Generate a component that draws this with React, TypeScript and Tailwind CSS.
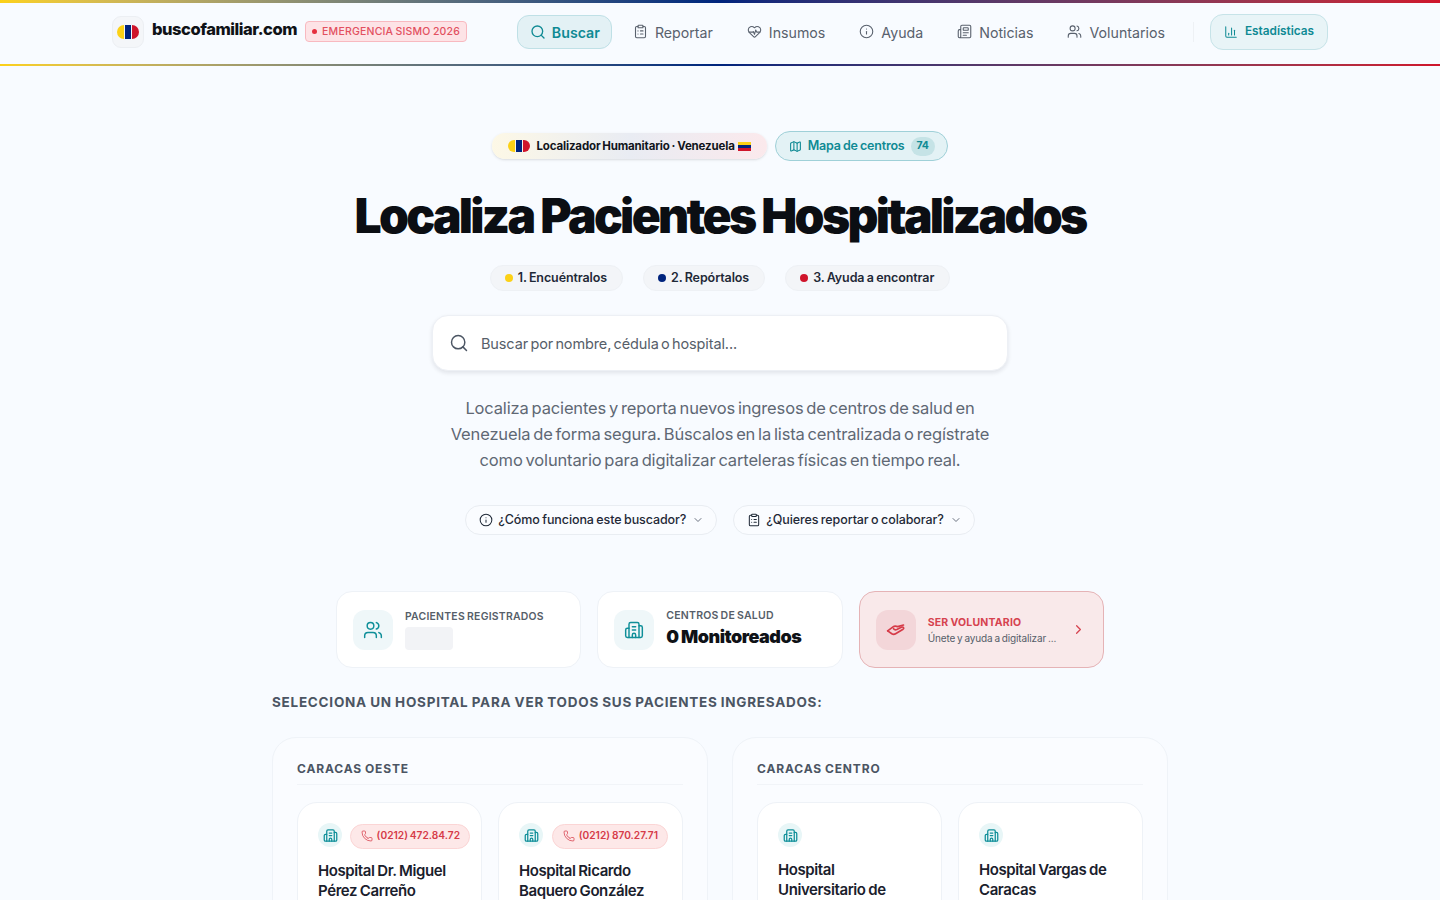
import {
  BarChart3,
  Building2,
  ChevronDown,
  ChevronRight,
  ClipboardList,
  HeartPulse,
  Info,
  Map as MapIcon,
  Newspaper,
  Phone,
  Search,
  Users,
} from 'lucide-react';

const navItems = [
  { label: 'Reportar', icon: ClipboardList },
  { label: 'Insumos', icon: HeartPulse },
  { label: 'Ayuda', icon: Info },
  { label: 'Noticias', icon: Newspaper },
  { label: 'Voluntarios', icon: Users },
];

const zones = [
  {
    name: 'CARACAS OESTE',
    hospitals: [
      { lines: ['Hospital Dr. Miguel', 'Pérez Carreño'], phone: '(0212) 472.84.72', pillMargin: '-mr-[9px]' },
      { lines: ['Hospital Ricardo', 'Baquero González'], phone: '(0212) 870.27.71', pillMargin: '-mr-[6px]' },
    ],
  },
  {
    name: 'CARACAS CENTRO',
    hospitals: [
      { lines: ['Hospital', 'Universitario de'], phone: '', pillMargin: '' },
      { lines: ['Hospital Vargas de', 'Caracas'], phone: '', pillMargin: '' },
    ],
  },
];

function FlagDot({ small }: { small?: boolean }) {
  return (
    <div className={small ? 'flex h-[12px] w-[22px] overflow-hidden' : 'flex h-[14px] w-[22px] overflow-hidden'}>
      <div className="w-[7px] rounded-l-full bg-[#fcd116]" />
      <div className="mx-px w-[7px] flex-1 bg-[#00247d]" />
      <div className="w-[7px] rounded-r-full bg-[#cf142b]" />
    </div>
  );
}

function ClaspIcon() {
  return (
    <svg width="20" height="20" viewBox="0 0 24 24" fill="none" stroke="#d63b48" strokeWidth="2" strokeLinecap="round" strokeLinejoin="round">
      <path d="M2 13l6-4.500c2-1.500 4-1.500 6-.5l7-2" />
      <path d="M2 13l5 3.500c1.500 1 3 1 4.500 0l9-5.500c1.500-1 .5-3-1.500-2.500l-6 3c-1.500 .7-3 .3-4-1" />
    </svg>
  );
}

function StepPill({ color, label }: { color: string; label: string }) {
  return (
    <div className="flex h-[26px] items-center gap-[5px] rounded-full border border-[#eef1f5] bg-[#f3f5f8] pl-[14px] pr-[15px] text-[12.5px] font-semibold tracking-[-0.1px] text-[#1f2937]">
      <span className={`h-2 w-2 rounded-full ${color}`} />
      {label}
    </div>
  );
}

function HospitalCard({ lines, phone, pillMargin }: { lines: string[]; phone: string; pillMargin: string }) {
  return (
    <div className="h-[140px] rounded-[20px] border border-[#eef2f7] bg-white px-5 pt-5">
      <div className="flex h-[24px] items-center justify-between">
        <div className="flex h-6 w-6 items-center justify-center rounded-full bg-[#e8f6f7]">
          <Building2 size={15} className="text-[#0f8f99]" />
        </div>
        {phone && (
          <div className={`${pillMargin} mt-[2px] flex h-[25px] items-center gap-[4px] rounded-full border border-[#fbd5d5] bg-[#fde8e8] pl-[10px] pr-[9px] text-[10.2px] font-semibold text-[#d63b48]`}>
            <Phone size={12} strokeWidth={1.5} />
            {phone}
          </div>
        )}
      </div>
      <div className={`${phone ? 'mt-[14px]' : 'mt-[13px]'} text-[15px] font-semibold leading-[20px] tracking-[-0.4px] text-[#1a202c]`}>
        {lines[0]}
        <br />
        {lines[1]}
      </div>
    </div>
  );
}

export default function App() {
  return (
    <div className="h-[900px] overflow-hidden bg-[#f8fbff] font-['Inter','Liberation_Sans',sans-serif] [word-spacing:-0.7px]">
      <div className="h-[3px] bg-gradient-to-r from-[#fcd116] via-[#00247d] to-[#cf142b]" />
      <header className="flex h-[61px] items-center justify-between px-[112px] pb-[4px]">
        <div className="flex items-center">
          <div className="flex h-8 w-8 items-center justify-center rounded-[9px] border border-[#eceff3] bg-[#f4f6f9]">
            <FlagDot />
          </div>
          <span className="ml-2 -mt-1 text-[16.5px] font-extrabold tracking-[-0.45px] text-[#0f1217]">buscofamiliar.com</span>
          <div className="ml-2 flex h-[21px] items-center gap-[5px] rounded-[4px] border border-[#f8b9c0] bg-[#fde3e6] px-[6px] text-[10.5px] font-medium tracking-[0.2px] text-[#e2505f]">
            <span className="h-[5px] w-[5px] rounded-full bg-[#e5303f]" />
            EMERGENCIA SISMO 2026
          </div>
        </div>
        <nav className="flex items-center">
          <div className="mr-[4px] flex h-[34px] items-center gap-[6px] rounded-[12px] border border-[#bfe0e6] bg-[#e3f1f5] pl-[12px] pr-[11px] text-[14.2px] font-semibold text-[#0f8a94]">
            <Search size={16} />
            <span className="mt-[2px]">Buscar</span>
          </div>
          {navItems.map(({ label, icon: Icon }) => (
            <div key={label} className="flex items-center gap-[7px] px-[17px] text-[14.2px] text-[#59616d]">
              <Icon size={15} strokeWidth={1.75} />
              <span className="mt-[2px]">{label}</span>
            </div>
          ))}
          <div className="ml-[11px] mr-[16px] h-[20px] w-px bg-[#eef1f5]" />
          <div className="flex h-[36px] items-center gap-[7px] rounded-[13px] border border-[#c6e3e8] bg-[#e8f4f7] pl-[13px] pr-[13px] text-[11.8px] font-semibold text-[#0f8a94]">
            <BarChart3 size={14} strokeWidth={1.75} />
            {'Estadísticas'}
          </div>
        </nav>
      </header>
      <div className="h-[2px] bg-gradient-to-r from-[#fcd116] via-[#00247d] to-[#cf142b]" />

      <main className="flex flex-col items-center">
        <div className="mt-[65px] flex h-[30px] items-center gap-2">
          <div className="flex h-[26px] items-center gap-[6px] rounded-full bg-gradient-to-r from-[#fdf8e6] via-[#e9ecf3] to-[#fbe9ec] px-4 text-[11.5px] font-bold tracking-[-0.15px] text-[#11151c] shadow-sm">
            <FlagDot small />
            <span className="mt-[2px]">Localizador Humanitario · Venezuela</span>
            <svg width="13" height="9" viewBox="0 0 13 9" className="-ml-[3px]">
              <rect width="13" height="3" fill="#fcd116" />
              <rect y="3" width="13" height="3" fill="#00247d" />
              <rect y="6" width="13" height="3" fill="#cf142b" />
            </svg>
          </div>
          <div className="flex h-[30px] items-center gap-[6px] rounded-full border border-[#9fd0d8] bg-[#e3f2f5] pl-[13px] pr-[12px] text-[12.5px] font-semibold tracking-[-0.2px] text-[#0f8a94]">
            <MapIcon size={13} />
            Mapa de centros
            <span className="flex h-[19px] w-[24px] items-center justify-center rounded-full bg-[#c5e3e6] text-[10.5px] font-bold">74</span>
          </div>
        </div>

        <h1 className="mt-[25px] text-[48px] font-black leading-[60px] tracking-[-2.7px] text-[#0b0e13] [word-spacing:0px]">
          Localiza Pacientes Hospitalizados
        </h1>

        <div className="mt-[19px] flex items-center gap-5">
          <StepPill color="bg-[#fcd116]" label="1. Encuéntralos" />
          <StepPill color="bg-[#00247d]" label="2. Repórtalos" />
          <StepPill color="bg-[#cf142b]" label="3. Ayuda a encontrar" />
        </div>

        <div className="mt-[24px] flex h-[56px] w-[576px] items-center gap-[12px] rounded-[16px] border border-[#edf0f5] bg-white px-4 shadow-[0_2px_4px_rgba(15,23,42,0.1)]">
          <Search size={20} strokeWidth={1.75} className="text-[#4b5563]" />
          <span className="mt-[2px] text-[14.5px] tracking-[-0.12px] text-[#565e69] [word-spacing:-1.6px]">Buscar por nombre, cédula o hospital...</span>
        </div>

        <p className="mt-[24px] text-center text-[16.5px] leading-[26px] tracking-[-0.15px] text-[#5f6874] [word-spacing:-1.6px]">
          Localiza pacientes y reporta nuevos ingresos de centros de salud en
          <br />
          Venezuela de forma segura. Búscalos en la lista centralizada o regístrate
          <br />
          como voluntario para digitalizar carteleras físicas en tiempo real.
        </p>

        <div className="mt-[32px] flex items-center gap-4">
          <div className="flex h-[30px] items-center gap-[5px] rounded-full border border-[#e9edf2] bg-[#fafcff] pl-[13px] pr-[12px] text-[12.5px] font-medium tracking-[-0.1px] text-[#1f2937]">
            <Info size={14} strokeWidth={1.75} />
            ¿Cómo funciona este buscador?
            <ChevronDown size={12} className="ml-[1px] text-[#6b7280]" />
          </div>
          <div className="flex h-[30px] items-center gap-[5px] rounded-full border border-[#e9edf2] bg-[#fafcff] pl-[13px] pr-[12px] text-[12.5px] font-medium tracking-[-0.1px] text-[#1f2937]">
            <ClipboardList size={14} strokeWidth={1.75} />
            ¿Quieres reportar o colaborar?
            <ChevronDown size={12} className="ml-[1px] text-[#6b7280]" />
          </div>
        </div>

        <div className="mt-[56px] grid w-[768px] grid-cols-3 gap-4">
          <div className="flex h-[77px] items-center gap-[12px] rounded-[16px] border border-[#eef2f7] bg-white px-4">
            <div className="flex h-10 w-10 items-center justify-center rounded-[12px] bg-[#eff7f9]">
              <Users size={20} strokeWidth={1.75} className="text-[#0f8f99]" />
            </div>
            <div>
              <div className="pt-px text-[10.4px] font-semibold leading-[14px] tracking-[0.25px] text-[#565e69]">PACIENTES REGISTRADOS</div>
              <div className="mt-[3px] h-[23px] w-12 rounded-[4px] bg-[#f2f3f6]" />
            </div>
          </div>
          <div className="flex h-[77px] items-center gap-[12px] rounded-[16px] border border-[#eef2f7] bg-white px-4">
            <div className="flex h-10 w-10 items-center justify-center rounded-[12px] bg-[#eff7f9]">
              <Building2 size={20} strokeWidth={1.75} className="text-[#0f8f99]" />
            </div>
            <div className="mb-[2px]">
              <div className="pt-px text-[10.5px] font-semibold leading-[14px] tracking-[0.2px] text-[#565e69]">CENTROS DE SALUD</div>
              <div className="mt-[2px] text-[18px] font-black leading-[24px] tracking-[-0.5px] text-[#0f1217]">0 Monitoreados</div>
            </div>
          </div>
          <div className="flex h-[77px] items-center gap-[12px] rounded-[16px] border border-[#e5b3b6] bg-[#f9e9ea] px-4">
            <div className="flex h-10 w-10 items-center justify-center rounded-[12px] bg-[#f3d6d9]">
              <ClaspIcon />
            </div>
            <div className="mt-[2px] flex-1">
              <div className="text-[10.5px] font-bold tracking-[0.2px] text-[#d6434f]">SER VOLUNTARIO</div>
              <div className="mt-[1px] text-[10px] tracking-[-0.15px] text-[#565e69]">Únete y ayuda a digitalizar ...</div>
            </div>
            <ChevronRight size={15} className="mr-[1px] text-[#d6434f]" />
          </div>
        </div>

        <div className="mt-[25px] w-[896px]">
          <h2 className="text-[13.5px] font-bold leading-[18px] tracking-[0.75px] text-[#4b5563]">
            SELECCIONA UN HOSPITAL PARA VER TODOS SUS PACIENTES INGRESADOS:
          </h2>
          <div className="mt-[26px] grid grid-cols-2 gap-6">
            {zones.map((zone) => (
              <section key={zone.name} className="rounded-[24px] border border-[#eff3f8] bg-[#fafcff] px-6 pb-6 pt-[23px]">
                <div className="border-b border-[#f1f4f8] pb-[7px] text-[12px] font-bold leading-[16px] tracking-[0.85px] text-[#4b5563]">{zone.name}</div>
                <div className="mt-[17px] grid grid-cols-2 gap-4">
                  {zone.hospitals.map((h) => (
                    <HospitalCard key={h.lines[0]} lines={h.lines} phone={h.phone} pillMargin={h.pillMargin} />
                  ))}
                </div>
              </section>
            ))}
          </div>
        </div>
      </main>
    </div>
  );
}
